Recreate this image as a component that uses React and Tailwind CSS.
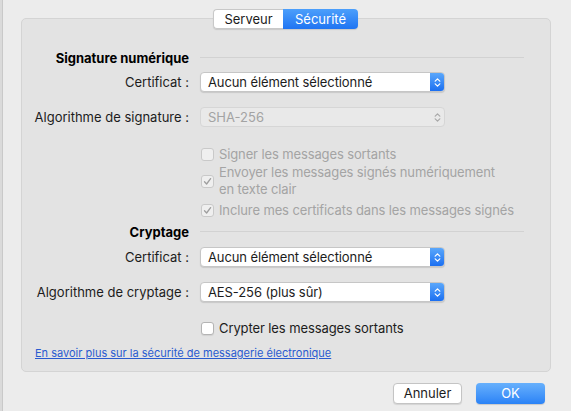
import React from 'react';

const Chevrons = ({ color }) => (
  <svg width="7" height="11" viewBox="0 0 7 11" fill="none">
    <path d="M1.2 4.2 L3.5 1.8 L5.8 4.2" stroke={color} strokeWidth="1.2" strokeLinecap="round" strokeLinejoin="round" />
    <path d="M1.2 6.8 L3.5 9.2 L5.8 6.8" stroke={color} strokeWidth="1.2" strokeLinecap="round" strokeLinejoin="round" />
  </svg>
);

const Check = ({ color }) => (
  <svg width="11" height="11" viewBox="0 0 11 11" fill="none">
    <path d="M2.5 5.8 L4.6 8 L8.6 2.6" stroke={color} strokeWidth="1.3" strokeLinecap="round" strokeLinejoin="round" />
  </svg>
);

const Popup = ({ value, disabled }) =>
  disabled ? (
    <div className="flex h-[20px] w-[245px] items-center justify-between rounded-[4px] border border-[#d6d6d6] bg-[#e9e9e9] pl-[7px] pr-[3px] text-[#a3a3a3]">
      <span>{value}</span>
      <Chevrons color="#a9a9a9" />
    </div>
  ) : (
    <div className="flex h-[20px] w-[245px] items-stretch overflow-hidden rounded-[4px] border border-[#c6c6c6] bg-white shadow-[0_1px_1px_rgba(0,0,0,0.12)]">
      <span className="flex flex-1 items-center pl-[7px] tracking-[-0.1px] text-[#1c1c1c]">{value}</span>
      <span className="flex w-[14px] items-center justify-center bg-gradient-to-b from-[#5aa7fb] to-[#1b6ff1]">
        <Chevrons color="#ffffff" />
      </span>
    </div>
  );

const Checkbox = ({ checked, disabled }) => (
  <span
    className={`flex h-[13px] w-[13px] shrink-0 items-center justify-center rounded-[3px] border ${
      disabled ? 'border-[#c9c9c9] bg-[#efefef]' : 'border-[#b4b4b4] bg-white shadow-[0_1px_1px_rgba(0,0,0,0.08)]'
    }`}
  >
    {checked && <Check color={disabled ? '#9e9e9e' : '#333333'} />}
  </span>
);

const Row = ({ label, children, className = '' }) => (
  <div className={`flex items-center ${className}`}>
    <span className="w-[167px] text-right text-[#1c1c1c]">{label}</span>
    <div className="ml-[11px]">{children}</div>
  </div>
);

const Heading = ({ title, className = '' }) => (
  <div className={`flex h-[16px] items-center ${className}`}>
    <span className="w-[167px] text-right font-bold text-black">{title}</span>
    <span className="ml-[11px] -mt-[2px] h-px w-[324px] bg-[#d2d2d2]"></span>
  </div>
);

export default function App() {
  return (
    <div className="flex h-[411px] w-[571px] overflow-hidden bg-[#ececec] text-[13px] leading-[17px] font-['Inter','Noto_Sans',sans-serif]">
      <div className="w-[3px] border-r border-[#c9c9c9] bg-[#dadada]"></div>
      <div className="flex flex-1 flex-col pt-[9px]">
        {/* tabs */}
        <div className="relative z-10 ml-[210px] flex h-[20px] w-[145px] rounded-[4px] shadow-[0_1px_1px_rgba(0,0,0,0.12)]">
          <div className="flex w-[70px] items-center justify-center rounded-l-[4px] border border-r-0 border-[#c8c8c8] bg-white text-[#1c1c1c]">
            Serveur
          </div>
          <div className="flex flex-1 items-center justify-center rounded-r-[4px] bg-gradient-to-b from-[#4c9ffb] to-[#1f74f2] text-white">
            Sécurité
          </div>
        </div>

        {/* group box */}
        <div className="-mt-[11px] ml-[18px] flex h-[354px] w-[530px] flex-col rounded-[5px] border border-[#d4d4d4] bg-[#e3e3e3] pt-[31px]">
          <Heading title="Signature numérique" />
          <Row label="Certificat :" className="mt-[6px]">
            <Popup value="Aucun élément sélectionné" />
          </Row>
          <Row label="Algorithme de signature :" className="mt-[15px]">
            <Popup value="SHA-256" disabled />
          </Row>

          <div className="ml-[179px] mt-[18px] flex flex-col tracking-[-0.12px] text-[#a4a4a4]">
            <label className="flex h-[18px] items-center gap-[5px]">
              <Checkbox disabled />
              <span>Signer les messages sortants</span>
            </label>
            <label className="mt-[1px] flex items-center gap-[5px]">
              <Checkbox checked disabled />
              <span>
                Envoyer les messages signés numériquement
                <br />
                en texte clair
              </span>
            </label>
            <label className="mt-[3px] flex h-[18px] items-center gap-[5px]">
              <Checkbox checked disabled />
              <span>Inclure mes certificats dans les messages signés</span>
            </label>
          </div>

          <Heading title="Cryptage" className="mt-[5px]" />
          <Row label="Certificat :" className="mt-[7px]">
            <Popup value="Aucun élément sélectionné" />
          </Row>
          <Row label="Algorithme de cryptage :" className="mt-[15px]">
            <Popup value="AES-256 (plus sûr)" />
          </Row>

          <label className="ml-[179px] mt-[17px] flex h-[18px] items-center gap-[5px] tracking-[-0.1px] text-[#1c1c1c]">
            <Checkbox />
            <span>Crypter les messages sortants</span>
          </label>

          <a className="ml-[13px] mt-[9px] self-start text-[11px] leading-[14px] text-[#2a5bd0] underline">
            En savoir plus sur la sécurité de messagerie électronique
          </a>
        </div>

        {/* buttons */}
        <div className="ml-[390px] mt-[11px] flex gap-[14px]">
          <button className="flex h-[21px] w-[69px] items-center justify-center rounded-[4px] border border-[#c4c4c4] bg-white text-[#1c1c1c] shadow-[0_1px_1px_rgba(0,0,0,0.1)]">
            Annuler
          </button>
          <button className="flex h-[21px] w-[69px] items-center justify-center rounded-[4px] bg-gradient-to-b from-[#67b0fc] to-[#2a82f6] text-white shadow-[0_1px_1px_rgba(0,0,0,0.15)]">
            OK
          </button>
        </div>
      </div>
    </div>
  );
}
